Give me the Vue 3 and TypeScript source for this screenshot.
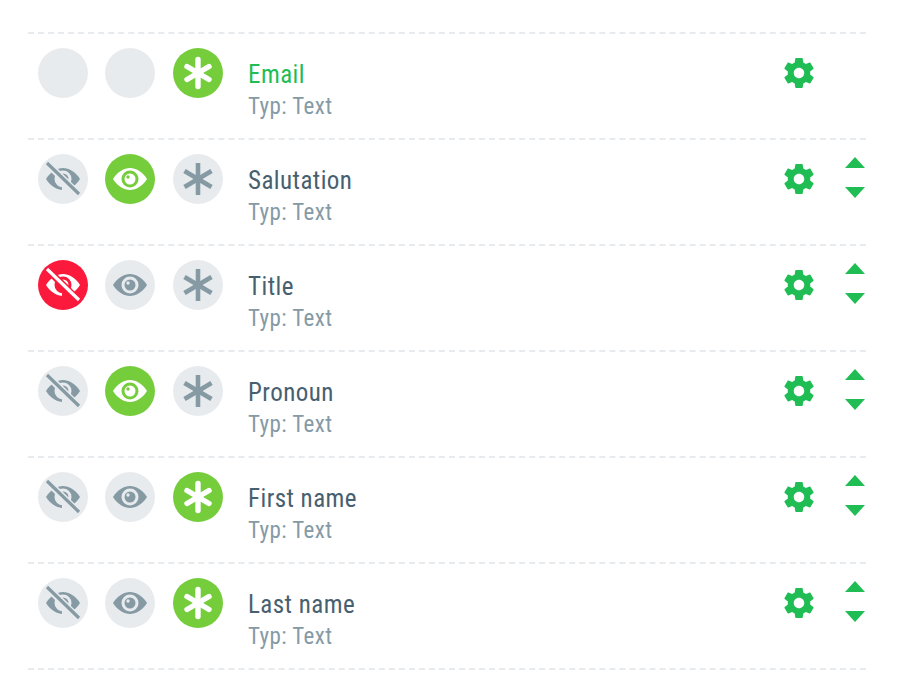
<script setup lang="ts">
type State = 'off' | 'on' | 'blank' | 'red'
interface Row { name: string; hide: State; show: State; req: State; first?: boolean }
const rows: Row[] = [
  { name: 'Email', hide: 'blank', show: 'blank', req: 'on', first: true },
  { name: 'Salutation', hide: 'off', show: 'on', req: 'off' },
  { name: 'Title', hide: 'red', show: 'off', req: 'off' },
  { name: 'Pronoun', hide: 'off', show: 'on', req: 'off' },
  { name: 'First name', hide: 'off', show: 'off', req: 'on' },
  { name: 'Last name', hide: 'off', show: 'off', req: 'on' },
]
const eyeShape = 'M8 25C13 17.5 19 14 25 14s12 3.5 17 11c-5 7.500-11 11-17 11S13 32.500 8 25z'
const gear = 'M19.43 12.98c.04-.32.07-.64.07-.98s-.03-.66-.07-.98l2.11-1.65c.19-.15.24-.42.12-.64l-2-3.46c-.12-.22-.39-.3-.61-.22l-2.49 1c-.52-.4-1.08-.73-1.69-.98l-.38-2.65C14.46 2.18 14.25 2 14 2h-4c-.25 0-.46.18-.49.42l-.38 2.65c-.61.25-1.17.59-1.69.98l-2.49-1c-.23-.09-.49 0-.61.22l-2 3.46c-.13.22-.07.49.12.64l2.11 1.65c-.04.32-.07.65-.07.98s.03.66.07.98l-2.11 1.65c-.19.15-.24.42-.12.64l2 3.46c.12.22.39.3.61.22l2.49-1c.52.4 1.08.73 1.69.98l.38 2.65c.03.24.24.42.49.42h4c.25 0 .46-.18.49-.42l.38-2.65c.61-.25 1.17-.59 1.69-.98l2.49 1c.23.09.49 0 .61-.22l2-3.46c.12-.22.07-.49-.12-.64l-2.11-1.65zM12 15.5c-1.93 0-3.5-1.57-3.5-3.5s1.57-3.5 3.5-3.5 3.5 1.570 3.5 3.5-1.57 3.5-3.5 3.5z'
</script>

<template>
  <div class="list">
    <div v-for="r in rows" :key="r.name" class="row">
      <div class="toggles">
        <span class="circle" :class="r.hide">
          <svg v-if="r.hide !== 'blank'" viewBox="0 0 50 50" class="icon">
            <path class="fg" :d="eyeShape" />
            <circle class="cut" cx="25" cy="25" r="8.500" />
            <path class="cut" d="M24 32h7l6 7H24z" />
            <line class="gap" x1="8" y1="8" x2="42" y2="42" />
            <path class="fg" d="M24.500 19.500A5.500 5.500 0 0 1 30.500 25.500z" />
            <line class="slash" x1="9" y1="9" x2="41" y2="40" />
          </svg>
        </span>
        <span class="circle" :class="r.show">
          <svg v-if="r.show !== 'blank'" viewBox="0 0 50 50" class="icon">
            <path class="fg" :d="eyeShape" />
            <circle class="cut" cx="25" cy="25" r="8.500" />
            <circle class="fg" cx="25" cy="25" r="5.500" />
            <circle class="cut" cx="23" cy="23" r="1.700" />
          </svg>
        </span>
        <span class="circle req" :class="r.req">
          <svg v-if="r.req === 'on'" viewBox="0 0 50 50" class="icon">
            <g class="star round">
              <line x1="25" y1="11.500" x2="25" y2="38.500" />
              <line x1="14" y1="18.500" x2="36" y2="31.500" />
              <line x1="14" y1="31.500" x2="36" y2="18.500" />
            </g>
          </svg>
          <svg v-else viewBox="0 0 50 50" class="icon">
            <g class="star">
              <line x1="25" y1="9" x2="25" y2="41" />
              <line x1="11.500" y1="17" x2="38.500" y2="33" />
              <line x1="11.500" y1="33" x2="38.500" y2="17" />
            </g>
          </svg>
        </span>
      </div>
      <div class="label">
        <div class="name" :class="{ active: r.first }">{{ r.name }}</div>
        <div class="type">Typ: Text</div>
      </div>
      <svg viewBox="0 0 24 24" class="gear"><path fill="currentColor" :d="gear" /></svg>
      <div class="sort">
        <template v-if="!r.first">
          <svg viewBox="0 0 20 11" class="arrow"><path fill="currentColor" d="M0 11 10 0l10 11z" /></svg>
          <svg viewBox="0 0 20 11" class="arrow"><path fill="currentColor" d="M0 0h20L10 11z" /></svg>
        </template>
      </div>
    </div>
  </div>
</template>

<style scoped>
.list {
  margin: 32px 31px 0 28px;
  border-top: 2px dashed #e8ebee;
  font-family: Roboto, "Liberation Sans", sans-serif;
}
.row {
  display: flex;
  height: 104px;
  border-bottom: 2px dashed #e8ebee;
}
.toggles {
  display: flex;
  gap: 17px;
  padding: 14px 0 0 10px;
}
.circle {
  width: 50px;
  height: 50px;
  border-radius: 50%;
  display: block;
  --fg: #869aa4;
  --bg: #e8ebee;
  background: var(--bg);
}
.circle.req { margin-left: 1px; }
.circle.on { --bg: #76cd3c; --fg: #fff; }
.circle.red { --bg: #fb1a3c; --fg: #fff; }
.icon { width: 50px; height: 50px; display: block; }
.fg { fill: var(--fg); }
.cut { fill: var(--bg); }
.gap { stroke: var(--bg); stroke-width: 7; }
.slash { stroke: var(--fg); stroke-width: 3.200; }
.star line { stroke: var(--fg); stroke-width: 4.600; }
.star.round line { stroke-linecap: round; stroke-width: 5.400; }
.label {
  margin-left: 25px;
  padding-top: 26px;
  flex: 1;
}
.name {
  font-size: 25px;
  line-height: 30px;
  letter-spacing: 0.45px;
  color: #476070;
  font-stretch: 75%;
  font-family: "Roboto Condensed", Roboto, sans-serif;
}
.name.active { color: #1fbd53; }
.type {
  font-size: 23px;
  line-height: 30px;
  margin-top: 2px;
  letter-spacing: 0.4px;
  color: #869aa6;
  font-stretch: 75%;
  font-family: "Roboto Condensed", Roboto, sans-serif;
}
.gear {
  width: 36px;
  height: 36px;
  margin: 21px 0 0;
  color: #1fbd53;
}
.sort {
  width: 21px;
  margin-left: 28px;
  padding-top: 17px;
  display: flex;
  flex-direction: column;
  gap: 19px;
  color: #1fbd53;
}
.arrow { width: 20px; height: 11px; display: block; }
</style>
